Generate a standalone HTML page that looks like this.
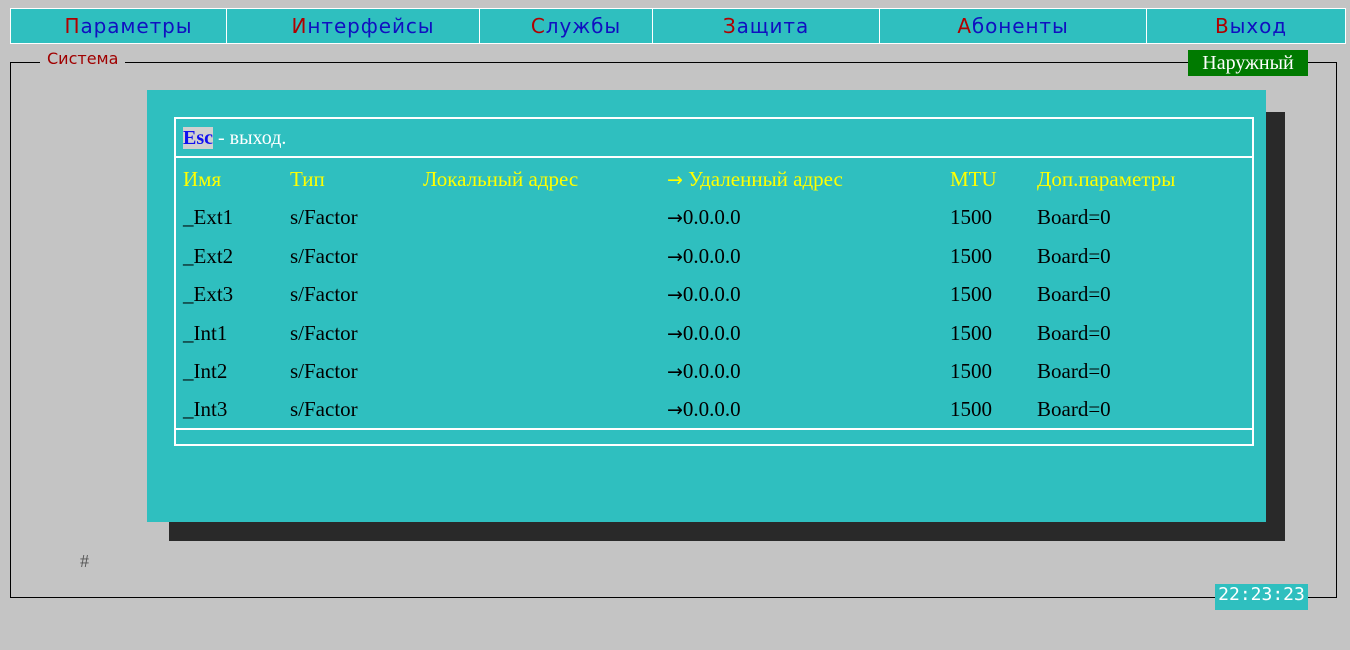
<!DOCTYPE html>
<html><head><meta charset="utf-8"><style>
body{margin:0;width:1350px;height:650px;background:#c4c4c4;position:relative;overflow:hidden;font-family:"Liberation Serif",serif}
.a{position:absolute;white-space:nowrap}
.m{position:absolute;top:8px;height:34px;background:#2fbfbf;border:1px solid #fff;font-family:"DejaVu Sans","Liberation Sans",sans-serif;font-size:20px;color:#1010c0;line-height:34px;text-align:center;letter-spacing:0.9px}
.m b{font-weight:normal;color:#b00000}
.r{position:absolute;left:0;width:1350px;height:24px;line-height:24px;font-size:21px;color:#000}
.r span{position:absolute;top:0;white-space:nowrap}
.y{color:#ffff00}
.ar{font-family:"DejaVu Sans",sans-serif;font-size:19px}
</style></head><body>
<div class="m" style="left:10px;width:215px;text-indent:20px"><b>П</b>араметры</div>
<div class="m" style="left:226px;width:252px;text-indent:20px"><b>И</b>нтерфейсы</div>
<div class="m" style="left:479px;width:172px;text-indent:20px"><b>С</b>лужбы</div>
<div class="m" style="left:652px;width:226px;text-indent:0px"><b>З</b>ащита</div>
<div class="m" style="left:879px;width:266px;text-indent:0px"><b>А</b>боненты</div>
<div class="m" style="left:1146px;width:198px;text-indent:10px"><b>В</b>ыход</div>

<div class="a" style="left:10px;top:62px;width:1325px;height:534px;border:1px solid #000"></div>
<div class="a" style="left:40px;top:49px;padding:0 7px;background:#c4c4c4;color:#a00000;font-family:'DejaVu Sans',sans-serif;font-size:16px;line-height:20px">Система</div>
<div class="a" style="left:1188px;top:50px;width:120px;height:26px;background:#007a00;color:#fff;font-size:20px;line-height:26px;text-align:center">Наружный</div>

<div class="a" style="left:169px;top:112px;width:1116px;height:429px;background:#292929"></div>
<div class="a" style="left:147px;top:90px;width:1119px;height:432px;background:#2fbfbf"></div>
<div class="a" style="left:174px;top:117px;width:1076px;height:325px;border:2px solid #fff"></div>
<div class="a" style="left:176px;top:156px;width:1076px;height:2px;background:#fff"></div>
<div class="a" style="left:176px;top:428px;width:1076px;height:2px;background:#fff"></div>
<div class="a" style="left:183px;top:126px;font-size:20px;line-height:24px;color:#fff"><span style="background:#d0d0d0;color:#1010f0;font-weight:bold">Esc</span> - выход.</div>

<div class="r y" style="top:167px"><span style="left:183px">Имя</span><span style="left:290px">Тип</span><span style="left:423px">Локальный адрес</span><span style="left:667px"><span class="ar" style="position:static">→</span> Удаленный адрес</span><span style="left:950px">MTU</span><span style="left:1037px">Доп.параметры</span></div>

<div class="r" style="top:205px"><span style="left:183px">_Ext1</span><span style="left:290px">s/Factor</span><span style="left:667px"><span class="ar" style="position:static">→</span>0.0.0.0</span><span style="left:950px">1500</span><span style="left:1037px">Board=0</span></div>
<div class="r" style="top:244px"><span style="left:183px">_Ext2</span><span style="left:290px">s/Factor</span><span style="left:667px"><span class="ar" style="position:static">→</span>0.0.0.0</span><span style="left:950px">1500</span><span style="left:1037px">Board=0</span></div>
<div class="r" style="top:282px"><span style="left:183px">_Ext3</span><span style="left:290px">s/Factor</span><span style="left:667px"><span class="ar" style="position:static">→</span>0.0.0.0</span><span style="left:950px">1500</span><span style="left:1037px">Board=0</span></div>
<div class="r" style="top:321px"><span style="left:183px">_Int1</span><span style="left:290px">s/Factor</span><span style="left:667px"><span class="ar" style="position:static">→</span>0.0.0.0</span><span style="left:950px">1500</span><span style="left:1037px">Board=0</span></div>
<div class="r" style="top:359px"><span style="left:183px">_Int2</span><span style="left:290px">s/Factor</span><span style="left:667px"><span class="ar" style="position:static">→</span>0.0.0.0</span><span style="left:950px">1500</span><span style="left:1037px">Board=0</span></div>
<div class="r" style="top:397px"><span style="left:183px">_Int3</span><span style="left:290px">s/Factor</span><span style="left:667px"><span class="ar" style="position:static">→</span>0.0.0.0</span><span style="left:950px">1500</span><span style="left:1037px">Board=0</span></div>

<div class="a" style="left:80px;top:551px;font-size:18px;color:#555">#</div>
<div class="a" style="left:1215px;top:584px;width:93px;height:26px;background:#2fbfbf;color:#fff;font-family:'DejaVu Sans Mono',monospace;font-size:18px;line-height:22px;text-align:center">22:23:23</div>
</body></html>
